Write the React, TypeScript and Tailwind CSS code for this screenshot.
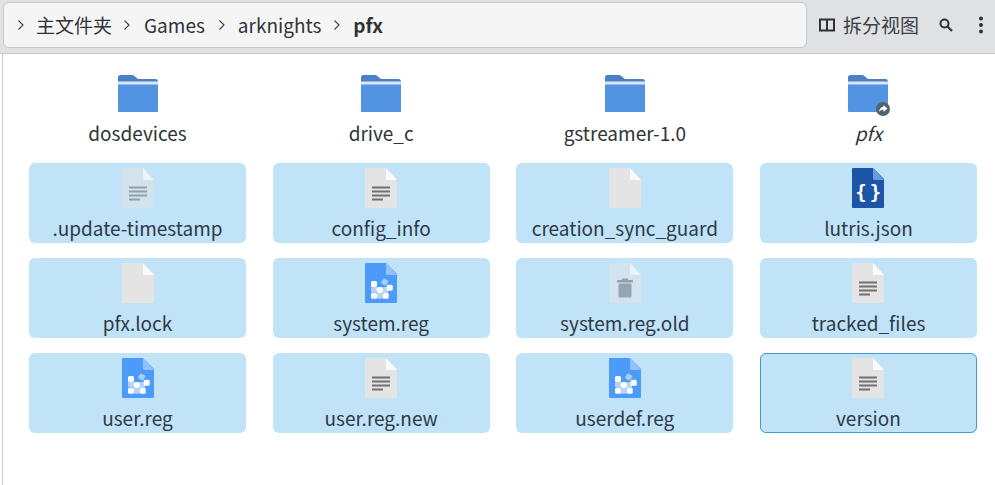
import React from "react";

const font = { fontFamily: '"Noto Sans CJK SC", "Noto Sans", sans-serif' };

function Folder({ link }: { link?: boolean }) {
  return (
    <svg width="44" height="40" viewBox="0 0 44 40" className="block overflow-visible">
      <path d="M2 5.500C2 4 3 3 4.500 3H16c1 0 1.600.3 2.300.9L22 7h17.500C41 7 42 8 42 9.500V38.500c0 1-.8 1.500-1.500 1.500H3.500C2.700 40 2 39.300 2 38.500Z" fill="#4a80c8" />
      <rect x="2" y="11" width="40" height="29" rx="1.500" fill="#5294e2" />
      <rect x="2" y="9.500" width="40" height="3" fill="#dbe7f5" />
      {link && (
        <g>
          <circle cx="37" cy="37" r="7" fill="#4f6473" />
          <path d="M37.500 33l4 3.500-4 3.500v-2.200c-2 0-3.400.6-4.500 2.200.3-2.800 1.800-5 4.500-5.200Z" fill="#fff" />
        </g>
      )}
    </svg>
  );
}

function Page({ body, fold, children }: { body: string; fold: string; children?: React.ReactNode }) {
  return (
    <svg width="34" height="42" viewBox="0 0 34 42" className="block">
      <path d="M2 1H22L33 12V40a1 1 0 0 1-1 1H2a1 1 0 0 1-1-1V2a1 1 0 0 1 1-1Z" fill={body} />
      <path d="M22 1L33 13H23.500C22.500 13 22 12.500 22 11.500Z" fill={fold} />
      {children}
    </svg>
  );
}

function TextLines({ color }: { color: string }) {
  return (
    <g fill={color}>
      <rect x="8" y="19.500" width="18" height="2" />
      <rect x="8" y="23.500" width="18" height="2" />
      <rect x="8" y="27.500" width="18" height="2" />
      <rect x="8" y="31.500" width="11" height="2" />
    </g>
  );
}

function RegBlocks() {
  const light = [[10, 27.5], [15.7, 33.7], [21, 28]];
  const white = [[10, 22], [25.7, 25.7], [15.7, 28], [10, 33.7], [21.7, 33.7]];
  return (
    <g>
      <rect x="17.700" y="17" width="6" height="6" rx="1.500" fill="#a9cdfa" transform="rotate(30 20.700 20)" />
      {light.map(([x, y]) => (
        <rect key={`${x}-${y}`} x={x - 3} y={y - 3} width="6" height="6" rx="1.500" fill="#b5d4fb" />
      ))}
      {white.map(([x, y]) => (
        <rect key={`${x}-${y}`} x={x - 3} y={y - 3} width="6" height="6" rx="1.500" fill="#fff" />
      ))}
    </g>
  );
}

const monoStyle = { fontFamily: '"DejaVu Sans Mono", monospace' };

const icons: Record<string, React.ReactNode> = {
  text: <Page body="#e4e4e4" fold="#fafafa"><TextLines color="#707070" /></Page>,
  hidden: <Page body="#d3e3ee" fold="#ecf4fa"><TextLines color="#8fa1ad" /></Page>,
  blank: <Page body="#e4e4e4" fold="#fafafa" />,
  json: (
    <Page body="#1c55a6" fold="#6a9ae0">
      <text x="10" y="32" textAnchor="middle" fontSize="19" fontWeight="700" fill="#fff" style={monoStyle}>{"{"}</text>
      <text x="24.500" y="32" textAnchor="middle" fontSize="19" fontWeight="700" fill="#fff" style={monoStyle}>{"}"}</text>
    </Page>
  ),
  reg: <Page body="#4c9bfb" fold="#92c1fb"><RegBlocks /></Page>,
  trash: (
    <Page body="#d3e3ee" fold="#ecf4fa">
      <rect x="9" y="18" width="16" height="2.500" rx="1" fill="#8fa1ad" />
      <rect x="14" y="16.500" width="6" height="2" fill="#8fa1ad" />
      <rect x="10.500" y="21.500" width="13" height="14" rx="1" fill="#95a6b2" />
    </Page>
  ),
};

const files: { name: string; icon: string; focus?: boolean }[] = [
  { name: ".update-timestamp", icon: "hidden" },
  { name: "config_info", icon: "text" },
  { name: "creation_sync_guard", icon: "blank" },
  { name: "lutris.json", icon: "json" },
  { name: "pfx.lock", icon: "blank" },
  { name: "system.reg", icon: "reg" },
  { name: "system.reg.old", icon: "trash" },
  { name: "tracked_files", icon: "text" },
  { name: "user.reg", icon: "reg" },
  { name: "user.reg.new", icon: "text" },
  { name: "userdef.reg", icon: "reg" },
  { name: "version", icon: "text", focus: true },
];

const folders: { name: string; link?: boolean }[] = [
  { name: "dosdevices" },
  { name: "drive_c" },
  { name: "gstreamer-1.0" },
  { name: "pfx", link: true },
];

function Chevron() {
  return (
    <svg width="8" height="12" viewBox="0 0 8 12" className="shrink-0">
      <path d="M1.500 1.500L6 6l-4.500 4.500" fill="none" stroke="#3d4145" strokeWidth="1.100" />
    </svg>
  );
}

export default function App() {
  return (
    <div className="w-[995px] h-[485px] bg-white overflow-hidden flex flex-col text-[#2e3436]" style={font}>
      <header className="h-[54px] shrink-0 bg-[#dfe1e3] border-b border-[#c4c6c9] flex items-start pt-[2px] pl-[3px]">
        <nav className="w-[804px] h-[46px] bg-[#f5f5f6] border border-[#c6c8cb] rounded-[6px] flex items-center pl-[13px] text-[19px]">
          <Chevron />
          <span className="ml-[11px]">主文件夹</span>
          <span className="ml-[11px]"><Chevron /></span>
          <span className="ml-[13px]">Games</span>
          <span className="ml-[13px]"><Chevron /></span>
          <span className="ml-[12px]">arknights</span>
          <span className="ml-[12px]"><Chevron /></span>
          <span className="ml-[12px] font-bold">pfx</span>
        </nav>
        <div className="flex items-center h-[46px] ml-[11px] text-[19px]">
          <svg width="18" height="16" viewBox="0 0 18 16" className="shrink-0">
            <path d="M2 2.500h14v11H2ZM9 2.500v11" fill="none" stroke="#2e3436" strokeWidth="2" />
          </svg>
          <span className="ml-[7px] text-[#3b4044]">拆分视图</span>
          <svg width="16" height="16" viewBox="0 0 16 16" className="ml-[19px] shrink-0">
            <circle cx="6.500" cy="6.500" r="4" fill="none" stroke="#2e3436" strokeWidth="2" />
            <path d="M9.500 9.500L14 14" stroke="#2e3436" strokeWidth="2.200" />
          </svg>
          <svg width="6" height="18" viewBox="0 0 6 18" className="ml-[24px] shrink-0">
            <circle cx="3" cy="2.500" r="2" fill="#2e3436" />
            <circle cx="3" cy="9" r="2" fill="#2e3436" />
            <circle cx="3" cy="15.500" r="2" fill="#2e3436" />
          </svg>
        </div>
      </header>
      <main className="flex-1 ml-[2px] border-l border-[#c9cbce] pl-[26px] pr-[18px] pt-[14px]">
        <div className="grid grid-cols-4 gap-x-[26.670px] gap-y-[15px]">
          {folders.map((f) => (
            <div key={f.name} className="h-[80px] flex flex-col items-center pt-[4px]">
              <Folder link={f.link} />
              <span className={`mt-[9px] text-[19px] leading-[24px] ${f.link ? "italic" : ""}`}>{f.name}</span>
            </div>
          ))}
          {files.map((f) => (
            <div
              key={f.name}
              className={`h-[80px] rounded-[6px] bg-[#c0e3f8] flex flex-col items-center ${f.focus ? "border border-[#3f98d0] pt-[3px]" : "pt-[4px]"}`}
            >
              {icons[f.icon]}
              <span className="mt-[7px] text-[19px] leading-[24px] text-[#2e3a46]">{f.name}</span>
            </div>
          ))}
        </div>
      </main>
    </div>
  );
}
